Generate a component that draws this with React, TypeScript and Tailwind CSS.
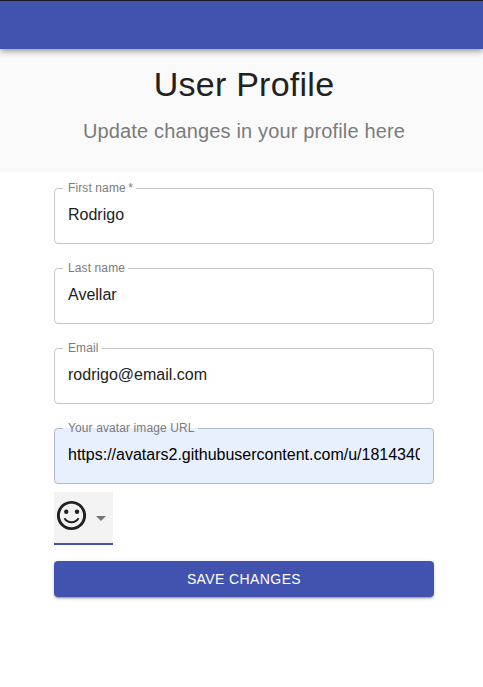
type FieldProps = {
  label: string;
  value: string;
  required?: boolean;
  autofilled?: boolean;
  notch: string;
};

function OutlinedField({ label, value, required, autofilled, notch }: FieldProps) {
  return (
    <div className={`relative flex h-14 w-full rounded ${autofilled ? "bg-[#e8effd]" : "bg-white"}`}>
      <input
        aria-label={label}
        defaultValue={value}
        spellCheck={false}
        className={`mx-3.5 h-[19px] mt-[17px] min-w-0 flex-1 bg-transparent p-0 text-[16px] leading-[19px] outline-none ${autofilled ? "text-black" : "text-[#212121]"}`}
      />
      <fieldset
        className={`pointer-events-none absolute inset-x-0 -top-[5px] bottom-0 min-w-0 rounded border px-2 ${autofilled ? "border-[#b2b9c8]" : "border-[#c4c4c4]"}`}
      >
        <legend className={`h-[11px] whitespace-nowrap pl-[5px] text-[12px] leading-[10px] tracking-[0.11px] text-[#7b7b7b] ${notch}`}>
          {label}
          {required && <span>&thinsp;*</span>}
        </legend>
      </fieldset>
    </div>
  );
}

export default function App() {
  return (
    <div className="flex min-h-[687px] flex-col bg-white font-['Liberation_Sans',Arial,sans-serif] text-[#212121]">
      <header className="relative z-10 h-[49px] border-t border-[#1b1b22] bg-[#4253af] shadow-[0_2px_4px_-1px_rgba(0,0,0,0.2),0_4px_5px_0_rgba(0,0,0,0.14),0_1px_10px_0_rgba(0,0,0,0.12)]" />
      <section className="h-[123px] bg-[#fafafa] pl-[5px] pt-[14px] text-center">
        <h1 className="text-[34px] leading-[42px] tracking-[0.25px]">User Profile</h1>
        <h2 className="mt-[10px] text-[20px] leading-8 tracking-[0.15px] text-[#7b7b7b]">Update changes in your profile here</h2>
      </section>
      <form className="ml-[54px] flex w-[380px] flex-col pt-4">
        <div className="flex flex-col gap-6">
          <OutlinedField label="First name" value="Rodrigo" required notch="w-[73px]" />
          <OutlinedField label="Last name" value="Avellar" notch="w-[65px]" />
          <OutlinedField label="Email" value="rodrigo@email.com" notch="w-[39px]" />
          <OutlinedField
            label="Your avatar image URL"
            value="https://avatars2.githubusercontent.com/u/18143405"
            autofilled
            notch="w-[135px]"
          />
        </div>
        <button type="button" aria-label="Choose mood" className="mt-2 flex h-[53px] w-[59px] items-start border-b-2 border-[#4253af] bg-[#f3f3f3] pt-[6px]">
          <svg viewBox="0 0 24 24" className="h-[35px] w-[35px] shrink-0 fill-[#212121]">
            <circle cx="15.8" cy="9.4" r="1.5" />
            <circle cx="8.4" cy="9.4" r="1.5" />
            <path d="M7.2 13.9C9.2 17.5 14.8 17.5 16.8 13.9" fill="none" stroke="#212121" strokeWidth="1.3" />
            <path d="M11.99 2C6.47 2 2 6.48 2 12s4.47 10 9.99 10C17.52 22 22 17.52 22 12S17.52 2 11.99 2zM12 20c-4.42 0-8-3.58-8-8s3.58-8 8-8 8 3.58 8 8-3.58 8-8 8z" />
          </svg>
          <svg viewBox="0 0 24 24" className="mt-2 h-6 w-6 shrink-0 fill-[#757575]">
            <path d="M7 10l5 5 5-5z" />
          </svg>
        </button>
        <button type="button" className="mt-4 h-9 rounded bg-[#4253af] text-[14px] leading-6 tracking-[0.4px] text-white shadow-[0_3px_1px_-2px_rgba(0,0,0,0.2),0_2px_2px_0_rgba(0,0,0,0.14),0_1px_5px_0_rgba(0,0,0,0.12)]">
          SAVE CHANGES
        </button>
      </form>
    </div>
  );
}
